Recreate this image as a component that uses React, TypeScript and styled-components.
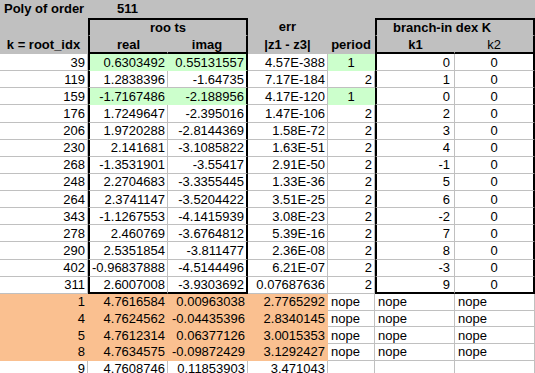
import { createGlobalStyle } from 'styled-components';
import styled from 'styled-components';

const GlobalStyle = createGlobalStyle`
  html, body {
    margin: 0;
    padding: 0;
    background: #ffffff;
  }
  body {
    font-family: 'Liberation Sans', Arial, sans-serif;
    font-size: 13px;
    color: #000;
  }
`;

const GRID = '#c0c0c0';
const HEAD = '#c0c0c0';
const GREEN = '#ccffcc';
const ORANGE = '#fac090';

const Sheet = styled.div`
  display: grid;
  grid-template-columns: 88px 80px 80px 80px 47px 80px 80px;
  width: 535px;
  height: 373px;
  overflow: hidden;
`;

type CellProps = {
  $bg?: string;
  $align?: 'left' | 'center' | 'right';
  $bold?: boolean;
  $span?: number;
  $h?: number;
  $left?: boolean;
  $right?: boolean;
  $top?: boolean;
  $bottom?: boolean;
  $pad?: number;
};

const Cell = styled.div<CellProps>`
  box-sizing: border-box;
  height: ${(p) => p.$h ?? 17}px;
  grid-column: span ${(p) => p.$span ?? 1};
  background: ${(p) => p.$bg ?? '#fff'};
  border-right: ${(p) => (p.$right ? '2px solid #000' : `1px solid ${p.$bg ?? GRID}`)};
  border-bottom: ${(p) => (p.$bottom ? '2px solid #000' : `1px solid ${p.$bg ?? GRID}`)};
  border-left: ${(p) => (p.$left ? '2px solid #000' : 'none')};
  border-top: ${(p) => (p.$top ? '2px solid #000' : 'none')};
  display: flex;
  align-items: center;
  justify-content: ${(p) =>
    p.$align === 'center' ? 'center' : p.$align === 'left' ? 'flex-start' : 'flex-end'};
  padding: 0 ${(p) => p.$pad ?? 2}px;
  font-weight: ${(p) => (p.$bold ? 'bold' : 'normal')};
  white-space: nowrap;
  overflow: hidden;
  line-height: 1;
`;

type Row = {
  k: string;
  re: string;
  im: string;
  err: string;
  period: string;
  k1: string;
  k2: string;
  hit?: boolean;
};

const rows: Row[] = [
  { k: '39', re: '0.6303492', im: '0.55131557', err: '4.57E-388', period: '1', k1: '0', k2: '0', hit: true },
  { k: '119', re: '1.2838396', im: '-1.64735', err: '7.17E-184', period: '2', k1: '1', k2: '0' },
  { k: '159', re: '-1.7167486', im: '-2.188956', err: '4.17E-120', period: '1', k1: '0', k2: '0', hit: true },
  { k: '176', re: '1.7249647', im: '-2.395016', err: '1.47E-106', period: '2', k1: '2', k2: '0' },
  { k: '206', re: '1.9720288', im: '-2.8144369', err: '1.58E-72', period: '2', k1: '3', k2: '0' },
  { k: '230', re: '2.141681', im: '-3.1085822', err: '1.63E-51', period: '2', k1: '4', k2: '0' },
  { k: '268', re: '-1.3531901', im: '-3.55417', err: '2.91E-50', period: '2', k1: '-1', k2: '0' },
  { k: '248', re: '2.2704683', im: '-3.3355445', err: '1.33E-36', period: '2', k1: '5', k2: '0' },
  { k: '264', re: '2.3741147', im: '-3.5204422', err: '3.51E-25', period: '2', k1: '6', k2: '0' },
  { k: '343', re: '-1.1267553', im: '-4.1415939', err: '3.08E-23', period: '2', k1: '-2', k2: '0' },
  { k: '278', re: '2.460769', im: '-3.6764812', err: '5.39E-16', period: '2', k1: '7', k2: '0' },
  { k: '290', re: '2.5351854', im: '-3.811477', err: '2.36E-08', period: '2', k1: '8', k2: '0' },
  { k: '402', re: '-0.96837888', im: '-4.5144496', err: '6.21E-07', period: '2', k1: '-3', k2: '0' },
  { k: '311', re: '2.6007008', im: '-3.9303692', err: '0.07687636', period: '2', k1: '9', k2: '0' },
];

const misses = [
  { k: '1', re: '4.7616584', im: '0.00963038', err: '2.7765292' },
  { k: '4', re: '4.7624562', im: '-0.04435396', err: '2.8340145' },
  { k: '5', re: '4.7612314', im: '0.06377126', err: '3.0015353' },
  { k: '8', re: '4.7634575', im: '-0.09872429', err: '3.1292427' },
];

const DATA_H = 17.14;
const MISS_H = 16.75;

export default function App() {
  return (
    <>
      <GlobalStyle />
      <Sheet>
        {/* title row */}
        <Cell $h={18} $bg={HEAD} $bold $align="left" $pad={4}>Poly of order</Cell>
        <Cell $h={18} $bg={HEAD} $bold $align="center">511</Cell>
        <Cell $h={18} $bg={HEAD} />
        <Cell $h={18} $bg={HEAD} />
        <Cell $h={18} $bg={HEAD} />
        <Cell $h={18} $bg={HEAD} />
        <Cell $h={18} $bg={HEAD} />

        {/* group header row */}
        <Cell $h={18} $bg={HEAD} />
        <Cell $h={18} $bg={HEAD} $span={2} $bold $align="center" $left $right $top>roo ts</Cell>
        <Cell $h={18} $bg={HEAD} $bold $align="center">err</Cell>
        <Cell $h={18} $bg={HEAD} />
        <Cell $h={18} $bg={HEAD} $span={2} $bold $align="left" $pad={16} $left $right $top>
          branch-in dex K
        </Cell>

        {/* column header row */}
        <Cell $h={18} $bg={HEAD} $bold $align="center">k = root_idx</Cell>
        <Cell $h={18} $bg={HEAD} $bold $align="center" $left $bottom>real</Cell>
        <Cell $h={18} $bg={HEAD} $bold $align="center" $right $bottom>imag</Cell>
        <Cell $h={18} $bg={HEAD} $bold $align="center">|z1 - z3|</Cell>
        <Cell $h={18} $bg={HEAD} $bold $align="center" $pad={0}>period</Cell>
        <Cell $h={18} $bg={HEAD} $bold $align="center" $left $bottom>k1</Cell>
        <Cell $h={18} $bg={HEAD} $align="center" $right $bottom>k2</Cell>

        {rows.map((r, i) => {
          const last = i === rows.length - 1;
          const fill = r.hit ? GREEN : undefined;
          return [
            <Cell key={`a${i}`} $h={DATA_H}>{r.k}</Cell>,
            <Cell key={`b${i}`} $h={DATA_H} $bg={fill} $left $bottom={last}>{r.re}</Cell>,
            <Cell key={`c${i}`} $h={DATA_H} $bg={fill} $right $bottom={last}>{r.im}</Cell>,
            <Cell key={`d${i}`} $h={DATA_H}>{r.err}</Cell>,
            <Cell key={`e${i}`} $h={DATA_H} $bg={fill} $align={r.hit ? 'center' : 'right'}>{r.period}</Cell>,
            <Cell key={`f${i}`} $h={DATA_H} $left $bottom={last} $pad={4}>{r.k1}</Cell>,
            <Cell key={`g${i}`} $h={DATA_H} $right $bottom={last} $align="center">{r.k2}</Cell>,
          ];
        })}

        {misses.map((m, i) => [
          <Cell key={`ma${i}`} $h={MISS_H} $bg={ORANGE}>{m.k}</Cell>,
          <Cell key={`mb${i}`} $h={MISS_H} $bg={ORANGE}>{m.re}</Cell>,
          <Cell key={`mc${i}`} $h={MISS_H} $bg={ORANGE}>{m.im}</Cell>,
          <Cell key={`md${i}`} $h={MISS_H} $bg={ORANGE}>{m.err}</Cell>,
          <Cell key={`me${i}`} $h={MISS_H} $align="left" $pad={3}>nope</Cell>,
          <Cell key={`mf${i}`} $h={MISS_H} $align="left" $pad={3}>nope</Cell>,
          <Cell key={`mg${i}`} $h={MISS_H} $align="left" $pad={3}>nope</Cell>,
        ])}

        <Cell $h={17}>9</Cell>
        <Cell $h={17}>4.7608746</Cell>
        <Cell $h={17}>0.11853903</Cell>
        <Cell $h={17}>3.471043</Cell>
        <Cell $h={17} />
        <Cell $h={17} />
        <Cell $h={17} />
      </Sheet>
    </>
  );
}
